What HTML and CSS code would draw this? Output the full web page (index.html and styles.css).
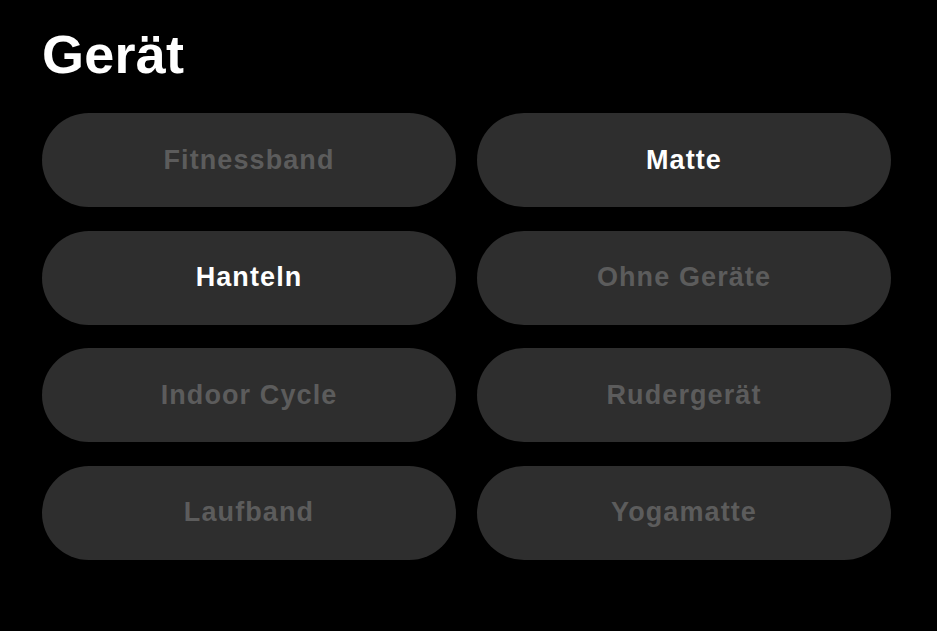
FILE: index.html
```html
<!DOCTYPE html>
<html lang="de">
<head>
<meta charset="utf-8">
<link rel="stylesheet" href="styles.css">
</head>
<body>
<main class="page">
  <h1 class="title">Gerät</h1>
  <div class="grid">
    <button class="chip">Fitnessband</button>
    <button class="chip active">Matte</button>
    <button class="chip active">Hanteln</button>
    <button class="chip">Ohne Geräte</button>
    <button class="chip">Indoor Cycle</button>
    <button class="chip">Rudergerät</button>
    <button class="chip">Laufband</button>
    <button class="chip">Yogamatte</button>
  </div>
</main>
</body>
</html>
```

FILE: styles.css
```css
html, body {
  margin: 0;
  padding: 0;
  background: #000;
}
.page {
  width: 937px;
  height: 631px;
  box-sizing: border-box;
  padding: 27px 46px 0 42px;
  font-family: "Liberation Sans", Arial, sans-serif;
}
.title {
  margin: 0;
  font-size: 54px;
  line-height: 54px;
  font-weight: 700;
  color: #fff;
  letter-spacing: 0.2px;
}
.grid {
  margin-top: 32px;
  display: grid;
  grid-template-columns: 414px 414px;
  column-gap: 21px;
  row-gap: 23.5px;
}
.chip {
  height: 94px;
  border: none;
  border-radius: 47px;
  background: #2e2e2e;
  color: #5c5c5c;
  font-family: "Liberation Sans", Arial, sans-serif;
  font-size: 27px;
  font-weight: 700;
  letter-spacing: 1.1px;
  display: flex;
  align-items: center;
  justify-content: center;
  padding: 0;
}
.chip.active {
  color: #fff;
}
```
